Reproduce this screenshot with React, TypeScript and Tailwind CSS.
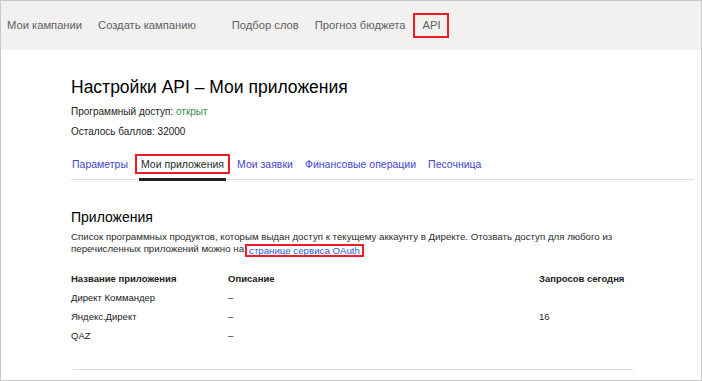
const navItems = [
  { label: "Мои кампании", ml: "ml-0" },
  { label: "Создать кампанию", ml: "ml-[16px]" },
  { label: "Подбор слов", ml: "ml-[36px]" },
  { label: "Прогноз бюджета", ml: "ml-[16px]" },
];

const tabs = ["Параметры", "Мои приложения", "Мои заявки", "Финансовые операции", "Песочница"];

const apps = [
  { name: "Директ Коммандер", desc: "–", count: "" },
  { name: "Яндекс.Директ", desc: "–", count: "16" },
  { name: "QAZ", desc: "–", count: "" },
];

export default function App() {
  return (
    <div className="h-[381px] w-[702px] overflow-hidden border border-[#c9c9c9] bg-white font-['Liberation_Sans',Arial,sans-serif]">
      <header className="flex h-[49px] items-center bg-[#f2f1ef] pl-[6px] text-[11.2px] text-[#5c5f66]">
        {navItems.map((item) => (
          <span key={item.label} className={item.ml}>
            {item.label}
          </span>
        ))}
        <span className="ml-[8px] flex h-[25px] items-center border-2 border-[#ee1c25] pl-[7px] pr-[6px]">API</span>
      </header>

      <main className="pl-[70px] pr-[7px]">
        <h1 className="mt-[26px] text-[17.5px] leading-[22px] text-black">Настройки API – Мои приложения</h1>
        <p className="mt-[8px] text-[10px] leading-[12px] text-[#222]">
          Программный доступ: <span className="text-[#3a8b4c]">открыт</span>
        </p>
        <p className="mt-[8px] text-[10px] leading-[12px] text-[#222]">Осталось баллов: 32000</p>

        <nav className="mt-[16px] flex items-start border-b border-[#dedede] text-[10.5px] leading-[16px]">
          {tabs.map((tab, i) =>
            i === 1 ? (
              <div key={tab} className="mr-[7px]">
                <span className="block border-2 border-[#ee1c25] px-[4px] text-[#2a2a2a]">{tab}</span>
                <div className="mx-[4px] mt-[4px] -mb-[2px] h-[3px] bg-[#222]" />
              </div>
            ) : (
              <span key={tab} className={(i === 0 ? "mr-[7px] pl-[1px]" : "mr-[12px]") + " pt-[2px] text-[#4545cc]"}>
                {tab}
              </span>
            ),
          )}
        </nav>

        <h2 className="mt-[28px] text-[14px] leading-[18px] text-black">Приложения</h2>
        <p className="mt-[5px] w-[560px] text-[9.7px] leading-[12px] text-[#2a2a2a]">
          Список программных продуктов, которым выдан доступ к текущему аккаунту в Директе. Отозвать доступ для любого из
          перечисленных приложений можно на
          <span className="ml-[1px] inline-block h-[13px] border-2 border-[#ee1c25] pl-[2px] pr-[2px] align-[-2px] leading-[9px] text-[#2c5bd6]">
            странице сервиса OAuth
          </span>
        </p>

        <div className="mt-[12px] w-[560px] text-[9.5px] text-[#222]">
          <div className="flex h-[20px] items-center font-bold">
            <span className="w-[157px]">Название приложения</span>
            <span className="flex-1">Описание</span>
            <span className="w-[92px]">Запросов сегодня</span>
          </div>
          {apps.map((app) => (
            <div key={app.name} className="flex h-[19px] items-center">
              <span className="w-[157px]">{app.name}</span>
              <span className="flex-1">{app.desc}</span>
              <span className="w-[92px]">{app.count}</span>
            </div>
          ))}
        </div>
        <div className="ml-[2px] mt-[23px] h-px w-[560px] bg-[#dcdcdc]" />
      </main>
    </div>
  );
}
